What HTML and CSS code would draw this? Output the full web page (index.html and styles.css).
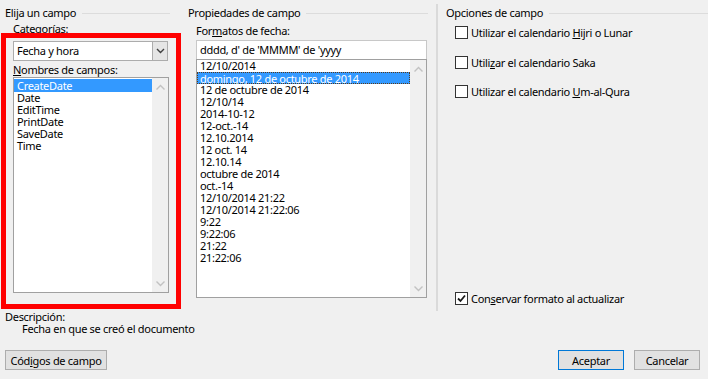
FILE: index.html
```html
<!DOCTYPE html>
<html>

<head>
    <meta charset="utf-8">
    <link rel="stylesheet" href="styles.css">
</head>

<body>
    <div class="dialog">
        <div class="columns">
            <div class="col col-field">
                <div class="group-title"><span>Elija un campo</span><div class="rule"></div></div>
                <div class="field-label first">Categorías:</div>
                <div class="combo">
                    <span class="combo-value">Fecha y hora</span>
                    <span class="combo-btn">
                        <svg width="9" height="6" viewBox="0 0 9 6"><path d="M1 1 L4.5 4.5 L8 1" fill="none" stroke="#404040" stroke-width="1.4"/></svg>
                    </span>
                </div>
                <div class="field-label"><u>N</u>ombres de campos:</div>
                <div class="listbox names">
                    <div class="items">
                        <div class="item selected">CreateDate</div>
                        <div class="item">Date</div>
                        <div class="item">EditTime</div>
                        <div class="item">PrintDate</div>
                        <div class="item">SaveDate</div>
                        <div class="item">Time</div>
                    </div>
                    <div class="scrollbar">
                        <svg width="11" height="7" viewBox="0 0 11 7"><path d="M1.5 5.5 L5.5 1.5 L9.5 5.5" fill="none" stroke="#c2c2c2" stroke-width="1.4"/></svg>
                        <svg width="11" height="7" viewBox="0 0 11 7"><path d="M1.5 1.5 L5.5 5.5 L9.5 1.5" fill="none" stroke="#c2c2c2" stroke-width="1.4"/></svg>
                    </div>
                </div>
            </div>

            <div class="col col-props">
                <div class="group-title"><span>Propiedades de campo</span><div class="rule"></div></div>
                <div class="field-label props-label">For<u>m</u>atos de fecha:</div>
                <div class="textbox">dddd, d' de 'MMMM' de 'yyyy</div>
                <div class="listbox formats">
                    <div class="items">
                        <div class="item">12/10/2014</div>
                        <div class="item selected focused">domingo, 12 de octubre de 2014</div>
                        <div class="item">12 de octubre de 2014</div>
                        <div class="item">12/10/14</div>
                        <div class="item">2014-10-12</div>
                        <div class="item">12-oct.-14</div>
                        <div class="item">12.10.2014</div>
                        <div class="item">12 oct. 14</div>
                        <div class="item">12.10.14</div>
                        <div class="item">octubre de 2014</div>
                        <div class="item">oct.-14</div>
                        <div class="item">12/10/2014 21:22</div>
                        <div class="item">12/10/2014 21:22:06</div>
                        <div class="item">9:22</div>
                        <div class="item">9:22:06</div>
                        <div class="item">21:22</div>
                        <div class="item">21:22:06</div>
                    </div>
                    <div class="scrollbar">
                        <svg width="11" height="7" viewBox="0 0 11 7"><path d="M1.5 5.5 L5.5 1.5 L9.5 5.5" fill="none" stroke="#c2c2c2" stroke-width="1.4"/></svg>
                        <svg width="11" height="7" viewBox="0 0 11 7"><path d="M1.5 1.5 L5.5 5.5 L9.5 1.5" fill="none" stroke="#c2c2c2" stroke-width="1.4"/></svg>
                    </div>
                </div>
            </div>

            <div class="col col-options">
                <div class="group-title"><span>Opciones de campo</span><div class="rule"></div></div>
                <div class="check-row first-check">
                    <span class="checkbox"></span>
                    <span>Utilizar el calendario <u>H</u>ijri o Lunar</span>
                </div>
                <div class="check-row">
                    <span class="checkbox"></span>
                    <span>Utili<u>z</u>ar el calendario Saka</span>
                </div>
                <div class="check-row third">
                    <span class="checkbox"></span>
                    <span>Utilizar el calendario <u>U</u>m-al-Qura</span>
                </div>
                <div class="check-row keep">
                    <span class="checkbox">
                        <svg width="11" height="11" viewBox="0 0 11 11"><path d="M2 5.5 L4.5 8 L9 2.5" fill="none" stroke="#1a1a1a" stroke-width="1.8"/></svg>
                    </span>
                    <span>Con<u>s</u>ervar formato al actualizar</span>
                </div>
            </div>
        </div>

        <div class="description">
            <div class="desc-title">Descripción:</div>
            <div class="desc-text">Fecha en que se creó el documento</div>
        </div>

        <div class="buttons">
            <button class="btn codes">Cód<u>i</u>gos de campo</button>
            <div class="spacer"></div>
            <button class="btn default">Aceptar</button>
            <button class="btn">Cancelar</button>
        </div>

        <div class="highlight-box"></div>
    </div>
</body>

</html>
```

FILE: styles.css
```css
body {
    margin: 0;
    background: #f0f0f0;
    font-family: 'Noto Sans', 'Open Sans', sans-serif;
    font-size: 11px;
    letter-spacing: -0.3px;
    color: #000;
}

.dialog {
    position: relative;
    width: 708px;
    height: 379px;
    overflow: hidden;
}

.columns {
    display: flex;
    height: 311px;
}

.col {
    display: flex;
    flex-direction: column;
    padding-top: 6px;
    box-sizing: border-box;
}

.col-field {
    width: 183px;
    padding-left: 5px;
    padding-right: 13px;
}

.col-props {
    width: 253px;
    padding-left: 5px;
    padding-right: 8px;
}

.col-options {
    width: 272px;
    height: 307px;
    padding-left: 8px;
    border-left: 2px solid #dadada;
    margin-top: 4px;
    padding-top: 2px;
}

.group-title {
    display: flex;
    align-items: center;
    height: 14px;
    line-height: 14px;
}

.rule {
    flex: 1;
    height: 1px;
    background: #dcdcdc;
    margin-left: 6px;
}

.field-label {
    line-height: 14px;
    margin-left: 8px;
    margin-top: 2px;
}

.props-label {
    margin-top: 4px;
}

.combo {
    display: flex;
    align-items: stretch;
    height: 20px;
    margin: 5px 0 0 8px;
    width: 155px;
    box-sizing: border-box;
    border: 1px solid #acacac;
    background: #fff;
}

.combo-value {
    flex: 1;
    line-height: 18px;
    padding-left: 3px;
}

.combo-btn {
    width: 14px;
    display: flex;
    align-items: center;
    justify-content: center;
    background: #e5e5e5;
    border-left: 1px solid #acacac;
}

.listbox {
    display: flex;
    margin-left: 8px;
    box-sizing: border-box;
    border: 1px solid #a0a0a0;
    background: #fff;
}

.listbox.names {
    width: 156px;
    height: 216px;
}

.listbox.formats {
    width: 231px;
    height: 239px;
}

.items {
    flex: 1;
    padding-top: 1px;
}

.item {
    line-height: 12px;
    height: 12px;
    padding-left: 3px;
    white-space: nowrap;
}

.item.selected {
    background: #3399ff;
    color: #fff;
    height: 13px;
    line-height: 13px;
}

.item.focused {
    box-sizing: border-box;
    border: 1px dotted #5a3a1a;
    line-height: 11px;
    padding-left: 2px;
}

.formats .items {
    padding-top: 0;
}

.formats .item.selected {
    height: 12px;
}

.scrollbar {
    width: 16px;
    background: #f0f0f0;
    display: flex;
    flex-direction: column;
    justify-content: space-between;
    align-items: center;
    padding: 6px 0 5px;
    box-sizing: border-box;
}

.textbox {
    margin: 2px 0 0 8px;
    width: 231px;
    height: 19px;
    box-sizing: border-box;
    border: 1px solid #c8c8c8;
    border-bottom: none;
    background: #fff;
    line-height: 17px;
    padding-left: 3px;
}

.check-row {
    display: flex;
    align-items: center;
    height: 14px;
    margin-left: 9px;
    gap: 3px;
    margin-top: 16px;
}

.check-row.first-check {
    margin-top: 5px;
}

.check-row.third {
    margin-top: 15px;
}

.check-row.keep {
    margin-top: auto;
    margin-bottom: 6px;
}

.checkbox {
    width: 13px;
    height: 13px;
    box-sizing: border-box;
    border: 1px solid #333;
    background: #fff;
    display: flex;
    align-items: center;
    justify-content: center;
}

.description {
    padding-left: 5px;
    line-height: 12px;
}

.desc-text {
    padding-left: 17px;
}

.buttons {
    display: flex;
    align-items: center;
    margin-top: 15px;
    padding: 0 8px 0 5px;
    gap: 10px;
}

.spacer {
    flex: 1;
}

.btn {
    height: 20px;
    width: 66px;
    padding: 0;
    font-family: inherit;
    font-size: 11px;
    letter-spacing: inherit;
    color: #000;
    background: #e1e1e1;
    border: 1px solid #adadad;
}

.btn.codes {
    width: 102px;
}

.btn.default {
    border-color: #0078d7;
}

.highlight-box {
    position: absolute;
    left: 1px;
    top: 33px;
    width: 180px;
    height: 276px;
    box-sizing: border-box;
    border: 5px solid #ff0000;
}
```
